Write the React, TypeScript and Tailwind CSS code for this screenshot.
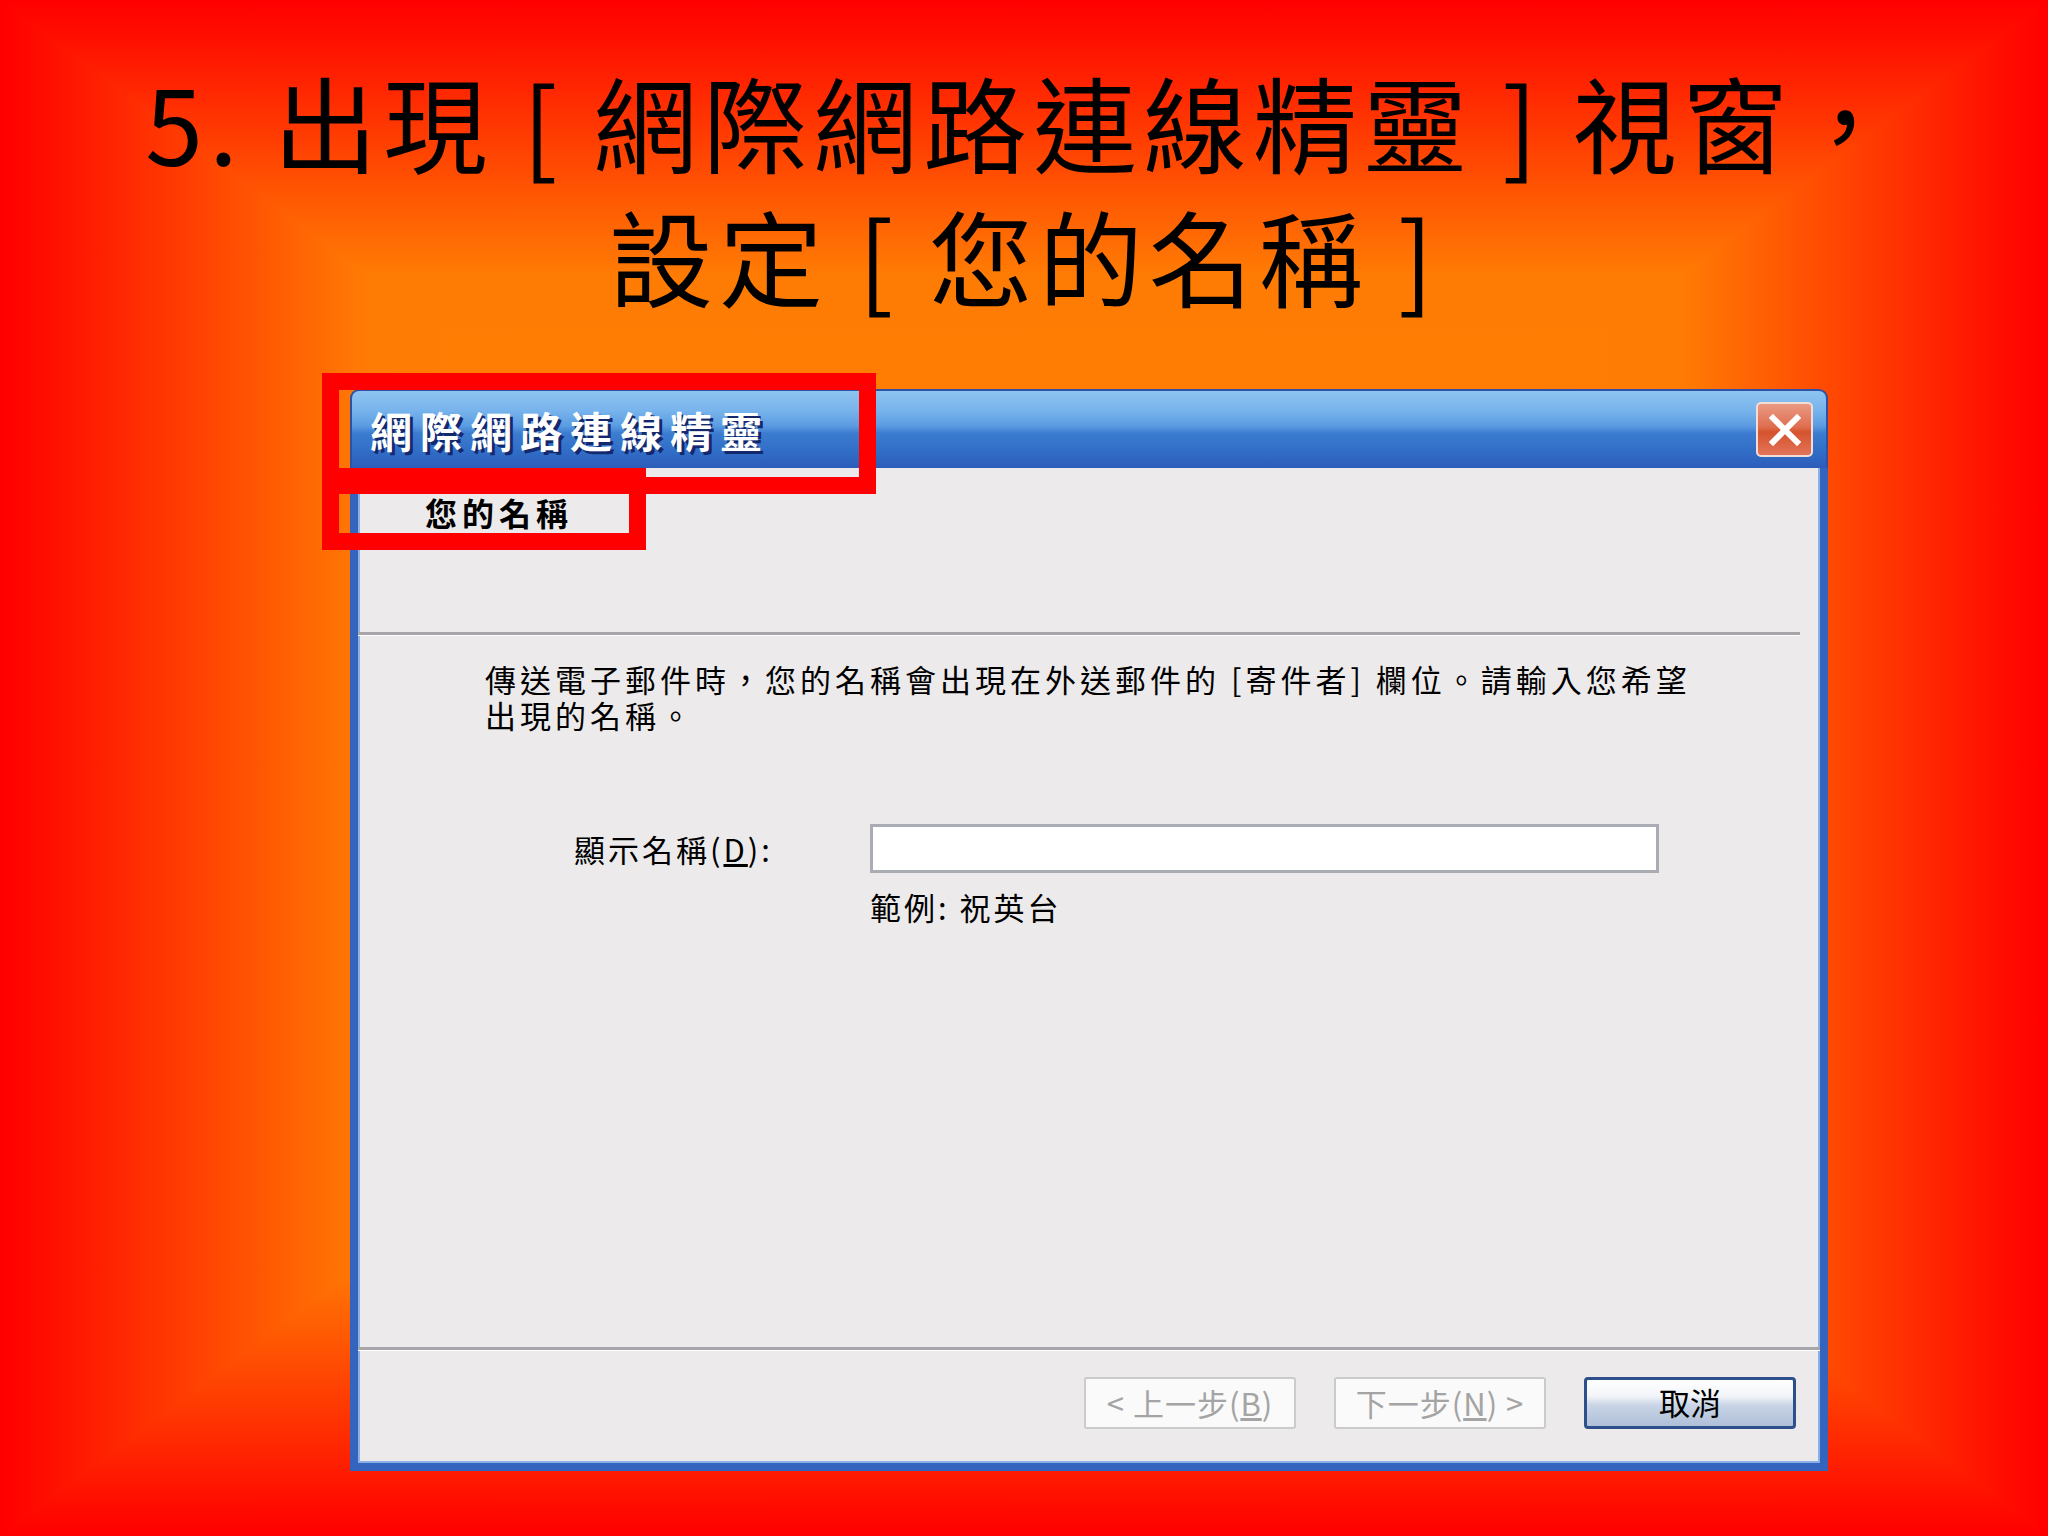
import React from 'react';

const cjk = "font-['Noto_Sans_CJK_TC','Noto_Sans_CJK_SC',sans-serif]";

function Backdrop() {
  const stops = (
    <>
      <stop offset="0" stopColor="#ff0000" />
      <stop offset="0.04" stopColor="#ff0c00" />
      <stop offset="0.36" stopColor="#ff7c04" />
      <stop offset="1" stopColor="#ff8000" />
    </>
  );
  return (
    <svg className="absolute inset-0 h-full w-full" viewBox="0 0 2048 1536" preserveAspectRatio="none" shapeRendering="crispEdges">
      <defs>
        <linearGradient id="gt" gradientUnits="userSpaceOnUse" x1="0" y1="0" x2="0" y2="768">{stops}</linearGradient>
        <linearGradient id="gb" gradientUnits="userSpaceOnUse" x1="0" y1="1536" x2="0" y2="768">{stops}</linearGradient>
        <linearGradient id="gl" gradientUnits="userSpaceOnUse" x1="0" y1="0" x2="1024" y2="0">{stops}</linearGradient>
        <linearGradient id="gr" gradientUnits="userSpaceOnUse" x1="2048" y1="0" x2="1024" y2="0">{stops}</linearGradient>
      </defs>
      <rect width="2048" height="1536" fill="#ff4000" />
      <polygon points="0,0 2048,0 1024,768" fill="url(#gt)" />
      <polygon points="0,1536 2048,1536 1024,768" fill="url(#gb)" />
      <polygon points="0,0 0,1536 1024,768" fill="url(#gl)" />
      <polygon points="2048,0 2048,1536 1024,768" fill="url(#gr)" />
    </svg>
  );
}

function XpButton({ children, primary }: { children: React.ReactNode; primary?: boolean }) {
  if (primary) {
    return (
      <div className="flex h-[52px] w-[212px] items-center justify-center rounded-[4px] border-[3px] border-[#2d4f8c] bg-[linear-gradient(to_bottom,#ffffff_0%,#f2f4f8_35%,#c9d4e6_55%,#aebfd8_100%)] pb-[4px] text-[31px] leading-none text-black">
        {children}
      </div>
    );
  }
  return (
    <div className="flex h-[52px] w-[212px] items-center justify-center rounded-[3px] border-2 border-[#cbcbcb] bg-[#fafafa] pb-[2px] text-[31px] leading-none tracking-[1px] text-[#a4a4a4]">
      {children}
    </div>
  );
}

export default function App() {
  return (
    <div className={`relative h-screen w-full overflow-hidden ${cjk}`}>
      <Backdrop />

      <div className="relative flex flex-col">
        {/* SLIDE TITLE */}
        <h1 className="pt-[54px] text-center text-[104px] tracking-[6px] text-black">
          <span className="block h-[134px] leading-[134px]">5. 出現 [ 網際網路連線精靈 ] 視窗，</span>
          <span className="block h-[134px] leading-[134px]">設定 [ 您的名稱 ]</span>
        </h1>

        {/* WIZARD WINDOW */}
        <div className="relative ml-[350px] mt-[67px] flex h-[1082px] w-[1478px] flex-col">
          <div className="flex h-[79px] items-center justify-between rounded-t-[9px] border-x-2 border-t-2 border-[#2f52a8] bg-[linear-gradient(to_bottom,#8ec4f0_0%,#78b4ec_25%,#5c9ce2_45%,#3c7ccf_55%,#3270c8_75%,#2c5cba_100%)] pl-[18px] pr-[13px]">
            <span className="text-[42px] font-bold leading-none tracking-[8px] text-white [text-shadow:3px_3px_0_#14286e]">
              網際網路連線精靈
            </span>
            <div className="flex h-[55px] w-[57px] items-center justify-center rounded-[5px] border-2 border-[#f1ddd6] bg-[linear-gradient(to_bottom,#e99a84_0%,#df6e50_45%,#d5532e_55%,#e27458_100%)]">
              <svg width="32" height="32" viewBox="0 0 32 32">
                <path d="M4 4 L28 28 M28 4 L4 28" stroke="#ffffff" strokeWidth="6" strokeLinecap="square" />
              </svg>
            </div>
          </div>

          <div className="flex flex-1 flex-col border-x-[8px] border-b-[8px] border-[#3464be] bg-[#eceaeb] shadow-[inset_2px_0_0_#8ab0e8,inset_-2px_0_0_#8ab0e8,inset_0_-2px_0_#8ab0e8]">
            {/* HEADER */}
            <div className="h-[164px] pl-[67px] pt-[26px]">
              <span className="text-[32px] font-bold leading-[36px] tracking-[5px] text-black">您的名稱</span>
            </div>
            <div className="mr-[20px] h-[3px] bg-[#a7a5aa]" />
            <div className="mr-[20px] h-px bg-white" />

            {/* CONTENT */}
            <div className="pl-[127px] pt-[25px] text-[31px] tracking-[4px] text-black">
              <p className="h-[36px] whitespace-nowrap leading-[36px]">
                傳送電子郵件時，您的名稱會出現在外送郵件的 [寄件者] 欄位。請輸入您希望
              </p>
              <p className="h-[36px] whitespace-nowrap leading-[36px]">出現的名稱。</p>
            </div>

            <div className="mt-[91px] flex items-center pl-[216px]">
              <span className="w-[296px] text-[31px] leading-[36px] tracking-[3px] text-black">
                顯示名稱(<span className="underline">D</span>):
              </span>
              <div className="h-[49px] w-[789px] border-[3px] border-[#a9acb3] bg-white" />
            </div>
            <p className="ml-[512px] mt-[16px] text-[31px] leading-[36px] tracking-[3px] text-black">範例: 祝英台</p>

            <div className="flex-1" />

            {/* FOOTER */}
            <div className="h-[3px] bg-[#a7a5aa]" />
            <div className="h-px bg-white" />
            <div className="flex justify-end gap-[38px] pb-[34px] pr-[24px] pt-[26px]">
              <XpButton>
                &lt; 上一步(<span className="underline">B</span>)
              </XpButton>
              <XpButton>
                下一步(<span className="underline">N</span>) &gt;
              </XpButton>
              <XpButton primary>取消</XpButton>
            </div>
          </div>

          {/* RED HIGHLIGHT BOXES */}
          <div className="absolute left-[-28px] top-[-16px] h-[121px] w-[554px] border-[17px] border-[#ff0000]" />
          <div className="absolute left-[-28px] top-[79px] h-[82px] w-[324px] border-x-[17px] border-b-[17px] border-t-[26px] border-[#ff0000]" />
        </div>
      </div>
    </div>
  );
}
